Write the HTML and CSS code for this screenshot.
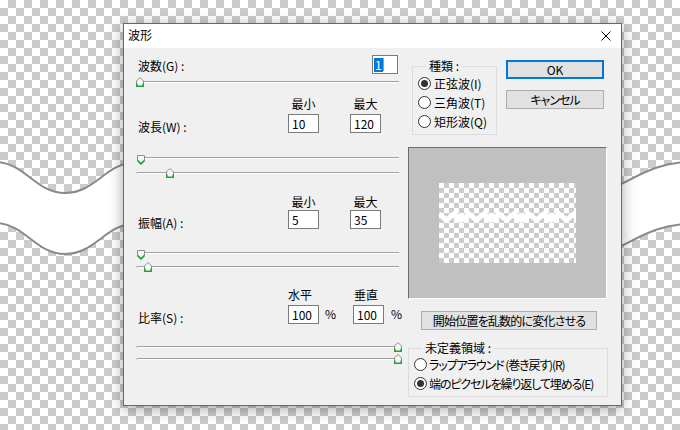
FILE: index.html
```html
<!DOCTYPE html>
<html lang="ja">
<head>
<meta charset="utf-8">
<title>波形</title>
<link rel="stylesheet" href="styles.css">
</head>
<body>
<div class="desk">
  <svg class="wave" width="680" height="430" viewBox="0 0 680 430">
    <path class="band" d="M-5 162 C25 162 35 193 65 193 C95 193 105 164 135 162 L135 223 C105 225 95 254 65 254 C35 254 25 223 -5 223 Z"/>
    <path class="edge" d="M-5 162 C25 162 35 193 65 193 C95 193 105 164 135 162"/>
    <path class="edge" d="M-5 223 C25 223 35 254 65 254 C95 254 105 225 135 223"/>
    <path class="band" d="M590 192 C625 192 640 163 690 162 L690 224 C640 225 625 254 590 254 Z"/>
    <path class="edge" d="M590 192 C625 192 640 163 690 162"/>
    <path class="edge" d="M590 254 C625 254 640 225 690 224"/>
  </svg>

  <div class="dialog">
    <div class="titlebar">
      <span class="title">波形</span>
      <svg class="close" width="10" height="10" viewBox="0 0 10 10"><path d="M0.5 0.5L9.5 9.5M9.5 0.5L0.5 9.5"/></svg>
    </div>
    <div class="body">
      <div class="left">
        <div class="row-g">
          <span class="label">波数(G) :</span>
          <span class="field narrow"><span class="sel">1</span><span class="caret"></span></span>
        </div>
        <div class="slider s-first">
          <svg class="thumb up" style="left:-1px" width="8" height="10" viewBox="0 0 8 10"><polygon class="tb" points="0.5,4 4,0.5 7.5,4 7.5,9.5 0.5,9.5"/><path class="tg" d="M0.8 6.5V9.2H7.2V6.5"/></svg>
        </div>

        <div class="heads h1"><span>最小</span><span>最大</span></div>
        <div class="frow r1">
          <span class="label">波長(W) :</span>
          <span class="field">10</span>
          <span class="field second">120</span>
        </div>
        <div class="pair p1">
          <div class="slider">
            <svg class="thumb down" style="left:0px" width="8" height="10" viewBox="0 0 8 10"><polygon class="tb" points="0.5,0.5 7.5,0.5 7.5,6 4,9.5 0.5,6"/><path class="tg" d="M0.8 5.5L4 8.8L7.2 5.5"/></svg>
          </div>
          <div class="slider round gap3">
            <svg class="thumb up" style="left:29px" width="8" height="10" viewBox="0 0 8 10"><polygon class="tb" points="0.5,4 4,0.5 7.5,4 7.5,9.5 0.5,9.5"/><path class="tg" d="M0.8 6.5V9.2H7.2V6.5"/></svg>
          </div>
        </div>

        <div class="heads h2"><span>最小</span><span>最大</span></div>
        <div class="frow r2">
          <span class="label">振幅(A) :</span>
          <span class="field">5</span>
          <span class="field second">35</span>
        </div>
        <div class="pair p2">
          <div class="slider">
            <svg class="thumb down" style="left:0px" width="8" height="10" viewBox="0 0 8 10"><polygon class="tb" points="0.5,0.5 7.5,0.5 7.5,6 4,9.5 0.5,6"/><path class="tg" d="M0.8 5.5L4 8.8L7.2 5.5"/></svg>
          </div>
          <div class="slider round gap2">
            <svg class="thumb up" style="left:7px" width="8" height="10" viewBox="0 0 8 10"><polygon class="tb" points="0.5,4 4,0.5 7.5,4 7.5,9.5 0.5,9.5"/><path class="tg" d="M0.8 6.5V9.2H7.2V6.5"/></svg>
          </div>
        </div>

        <div class="heads h3 lefty"><span>水平</span><span>垂直</span></div>
        <div class="frow r3">
          <span class="label">比率(S) :</span>
          <span class="field">100</span>
          <span class="pct">%</span>
          <span class="field">100</span>
          <span class="pct second">%</span>
        </div>
        <div class="pair p3">
          <div class="slider round">
            <svg class="thumb up" style="left:257px" width="8" height="10" viewBox="0 0 8 10"><polygon class="tb" points="0.5,4 4,0.5 7.5,4 7.5,9.5 0.5,9.5"/><path class="tg" d="M0.8 6.5V9.2H7.2V6.5"/></svg>
          </div>
          <div class="slider round">
            <svg class="thumb up" style="left:257px" width="8" height="10" viewBox="0 0 8 10"><polygon class="tb" points="0.5,4 4,0.5 7.5,4 7.5,9.5 0.5,9.5"/><path class="tg" d="M0.8 6.5V9.2H7.2V6.5"/></svg>
          </div>
        </div>
      </div>

      <div class="right">
        <div class="top">
          <fieldset class="group kind">
            <legend>種類 :</legend>
            <div class="radio"><span class="circle on"></span><span>正弦波(I)</span></div>
            <div class="radio"><span class="circle"></span><span>三角波(T)</span></div>
            <div class="radio"><span class="circle"></span><span>矩形波(Q)</span></div>
          </fieldset>
          <div class="buttons">
            <div class="btn default">OK</div>
            <div class="btn cancel">キャンセル</div>
          </div>
        </div>
        <div class="preview">
          <div class="canvas">
            <svg width="137" height="80" viewBox="0 0 137 80"><polyline class="zig" points="0,31 7.5,37 15,31 22.5,37 30,31 37.5,37 45,31 52.5,37 60,31 67.5,37 75,31 82.5,37 90,31 97.5,37 105,31 112.5,37 120,31 127.5,37 135,31 142.5,37"/></svg>
          </div>
        </div>
        <div class="btn random">開始位置を乱数的に変化させる</div>
        <fieldset class="group undef">
          <legend>未定義領域 :</legend>
          <div class="radio"><span class="circle"></span><span>ラップアラウンド (巻き戻す)(R)</span></div>
          <div class="radio"><span class="circle on"></span><span>端のピクセルを繰り返して埋める(E)</span></div>
        </fieldset>
      </div>
    </div>
  </div>
</div>
</body>
</html>
```

FILE: styles.css
```css
html, body {
  margin: 0;
  padding: 0;
}

body {
  font-family: "Noto Sans CJK JP", "Noto Sans", sans-serif;
  font-size: 12px;
  color: #000;
  font-feature-settings: "palt";
}

.desk {
  position: relative;
  width: 680px;
  height: 430px;
  overflow: hidden;
  background: repeating-conic-gradient(#cccccc 0 25%, #ffffff 0 50%) 0 0 / 16px 16px;
}

.wave {
  position: absolute;
  left: 0;
  top: 0;
}

.wave .band {
  fill: #ffffff;
  stroke: none;
}

.wave .edge {
  fill: none;
  stroke: #8a8a8a;
  stroke-width: 2;
}

.dialog {
  position: absolute;
  left: 123px;
  top: 23px;
  width: 499px;
  height: 383px;
  box-sizing: border-box;
  border: 1px solid #1a7ad4;
  background: #f0f0f0;
  box-shadow: 0 3px 14px rgba(0, 0, 0, 0.35);
  display: flex;
  flex-direction: column;
}

.titlebar {
  height: 24px;
  flex: none;
  background: #ffffff;
  display: flex;
  align-items: center;
  justify-content: space-between;
  padding: 0 10px 0 4px;
}

.title {
  line-height: 16px;
  margin-top: -2px;
}

.close path {
  stroke: #000;
  stroke-width: 1;
  fill: none;
}

.body {
  flex: 1;
  display: flex;
  padding: 0 13px;
  column-gap: 9px;
}

.left {
  width: 262px;
  flex: none;
  padding-top: 7px;
}

.label {
  padding-left: 1px;
  line-height: 16px;
}

.row-g {
  display: flex;
  justify-content: space-between;
  align-items: flex-start;
  padding-right: 1px;
  height: 19px;
}

.row-g .label {
  padding-top: 3px;
}

.field {
  display: block;
  width: 31px;
  height: 19px;
  box-sizing: border-box;
  border: 1px solid #7a7a7a;
  background: #ffffff;
  padding-left: 3px;
  line-height: 17px;
  flex: none;
  white-space: nowrap;
}

.field.narrow {
  width: 26px;
  padding-left: 1px;
  display: flex;
  align-items: center;
}

.sel {
  background: #0078d7;
  color: #ffffff;
  line-height: 14px;
  padding: 0 1px;
}

.caret {
  display: inline-block;
  width: 1px;
  height: 13px;
  background: #f08a1c;
}

/* sliders */
.slider {
  position: relative;
  height: 12px;
}

.slider::before {
  content: "";
  position: absolute;
  left: 0;
  right: 0;
  top: 5px;
  height: 1px;
  background: #a0a0a0;
  border-bottom: 1px solid #ffffff;
}

.slider.round::before {
  border-radius: 2px 0 0 2px;
  box-shadow: -1px 0 0 #c8c8c8;
}

.s-first {
  margin-top: 2px;
}

.thumb {
  position: absolute;
  display: block;
}

.thumb.up {
  top: 1px;
}

.thumb.down {
  top: 3px;
}

.thumb .tb {
  fill: #f6f6f6;
  stroke: #8c8c8c;
  stroke-width: 1;
}

.thumb .tg {
  fill: none;
  stroke: #22a33a;
  stroke-width: 1.6;
}

.gap3 {
  margin-top: 3px;
}

.gap2 {
  margin-top: 2px;
}

/* header rows */
.heads {
  display: flex;
  padding-left: 151px;
  line-height: 16px;
}

.heads span {
  width: 31px;
  text-align: center;
  white-space: nowrap;
}

.heads span + span {
  margin-left: 31px;
}

.heads.lefty span {
  text-align: left;
}

.heads.lefty span + span {
  margin-left: 35px;
}

.h1 { margin-top: 8px; }
.h2 { margin-top: 15px; }
.h3 { margin-top: 14px; }

.frow {
  display: flex;
  align-items: flex-start;
  height: 19px;
}

.frow .label {
  width: 150px;
  flex: none;
  padding-top: 5px;
}

.frow .field.second {
  margin-left: 31px;
}

.pct {
  width: 34px;
  flex: none;
  padding-left: 6px;
  box-sizing: border-box;
  line-height: 16px;
  padding-top: 1px;
}

.pct.second {
  width: 14px;
  padding-left: 7px;
}

.r1 { margin-top: 2px; }
.r2 { margin-top: 0; }
.r3 { margin-top: 2px; }

.p1 { margin-top: 19px; }
.p2 { margin-top: 18px; }
.p3 { margin-top: 17px; }

/* right column */
.right {
  width: 200px;
  flex: none;
  padding-top: 10px;
}

.top {
  display: flex;
  align-items: flex-start;
}

.group {
  margin: 0;
  padding: 0 0 3px 0;
  border: 1px solid #dcdcdc;
  box-sizing: border-box;
  min-inline-size: 0;
}

.group legend {
  margin-left: 13px;
  padding: 0 3px;
  line-height: 16px;
}

.kind {
  margin-left: 4px;
  width: 85px;
}

.radio {
  display: flex;
  align-items: center;
  height: 19px;
  white-space: nowrap;
}

.circle {
  width: 13px;
  height: 13px;
  box-sizing: border-box;
  border: 1px solid #333333;
  border-radius: 50%;
  background: #ffffff;
  margin-left: 5px;
  margin-right: 3px;
  flex: none;
  display: flex;
  align-items: center;
  justify-content: center;
}

.circle.on::after {
  content: "";
  width: 7px;
  height: 7px;
  border-radius: 50%;
  background: #333333;
}

.buttons {
  margin-left: 9px;
  padding-top: 2px;
  display: flex;
  flex-direction: column;
  row-gap: 11px;
}

.btn {
  box-sizing: border-box;
  height: 19px;
  background: #e1e1e1;
  border: 1px solid #adadad;
  text-align: center;
  line-height: 17px;
  white-space: nowrap;
}

.buttons .btn {
  width: 98px;
}

.btn.default {
  border: 2px solid #0078d7;
  line-height: 15px;
}

.btn.cancel {
  letter-spacing: -1px;
}

.preview {
  margin-top: 12px;
  width: 199px;
  height: 152px;
  box-sizing: border-box;
  border: 1px solid;
  border-color: #6b6b6b #ffffff #ffffff #6b6b6b;
  background: #c0c0c0;
  display: flex;
  align-items: center;
  justify-content: center;
}

.canvas {
  width: 137px;
  height: 80px;
  background: repeating-conic-gradient(#cccccc 0 25%, #ffffff 0 50%) 0 0 / 10px 10px;
}

.canvas svg {
  display: block;
}

.zig {
  fill: none;
  stroke: #ffffff;
  stroke-width: 5;
}

.btn.random {
  margin-top: 12px;
  margin-left: 13px;
  width: 176px;
  letter-spacing: -0.8px;
}

.undef {
  margin-top: 11px;
  width: 200px;
}

.undef legend {
  line-height: 14px;
}

.undef .radio {
  letter-spacing: -1.1px;
}

.undef .circle {
  margin-right: 2px;
}
```
